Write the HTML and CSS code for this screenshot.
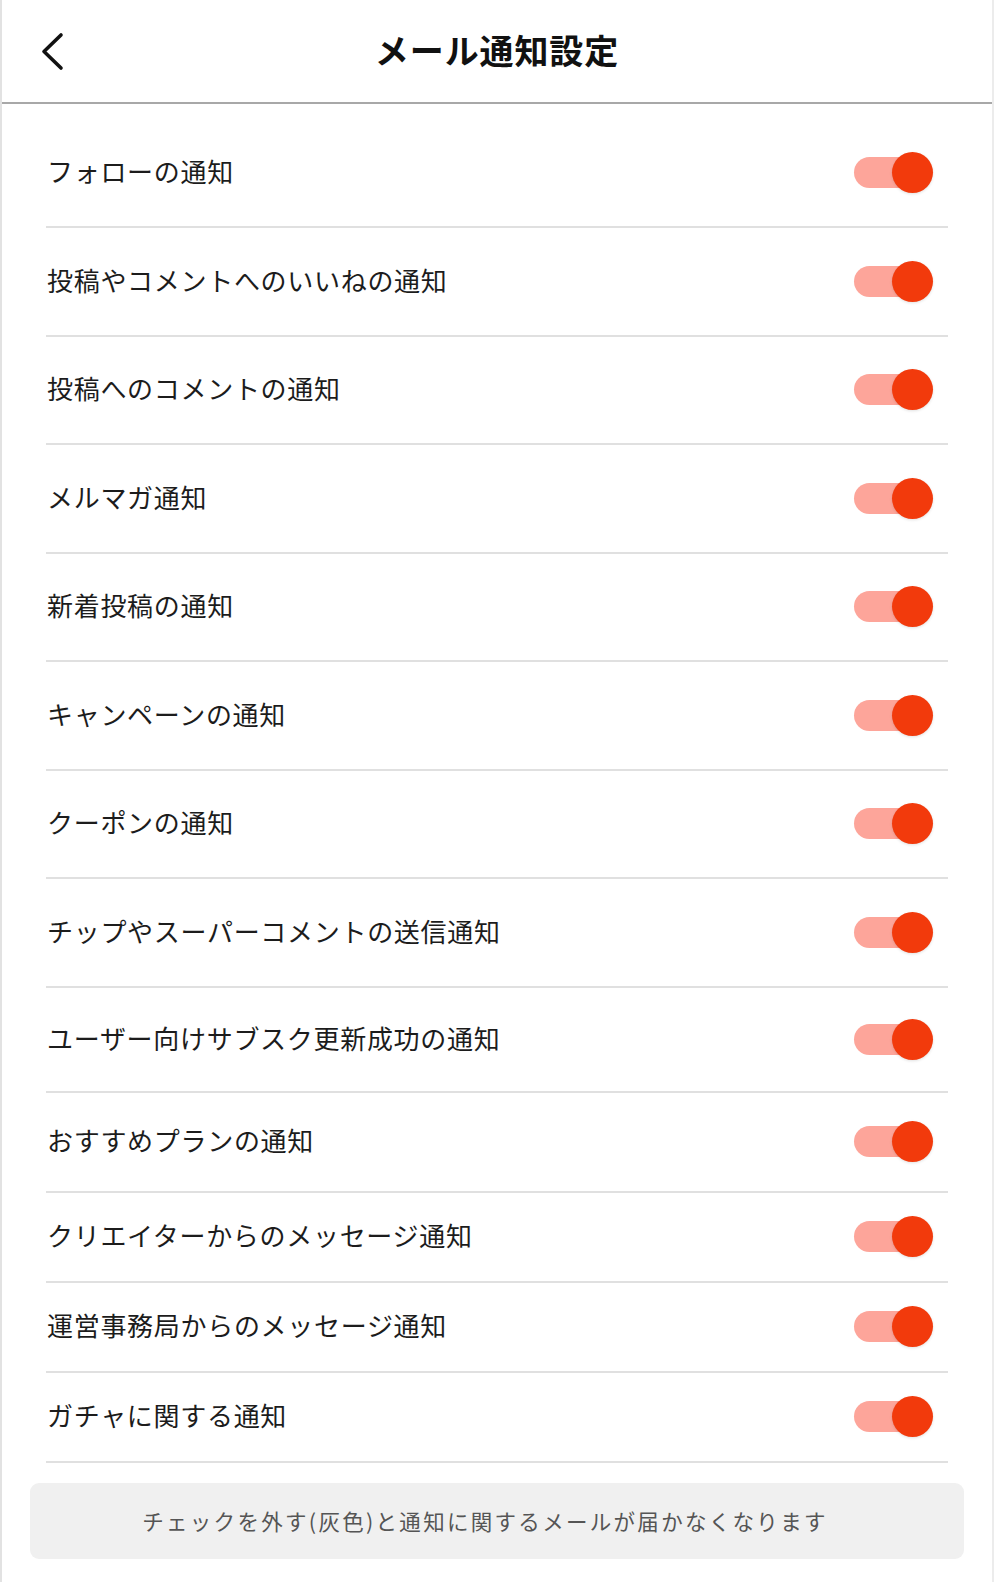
FILE: index.html
```html
<!DOCTYPE html>
<html lang="ja">
<head>
<meta charset="utf-8">
<title>メール通知設定</title>
<link rel="stylesheet" href="styles.css">
</head>
<body>
<div class="page">
  <header class="header">
    <button class="back" aria-label="戻る">
      <svg width="26" height="40" viewBox="0 0 26 40"><polyline points="21,3 4,19.5 21,36" fill="none" stroke="#111" stroke-width="3.6" stroke-linecap="round" stroke-linejoin="round"/></svg>
    </button>
    <h1 class="title">メール通知設定</h1>
  </header>
  <ul class="list">
    <li class="row"><span class="label">フォローの通知</span><span class="toggle"><span class="thumb"></span></span></li>
    <li class="row"><span class="label">投稿やコメントへのいいねの通知</span><span class="toggle"><span class="thumb"></span></span></li>
    <li class="row"><span class="label">投稿へのコメントの通知</span><span class="toggle"><span class="thumb"></span></span></li>
    <li class="row"><span class="label">メルマガ通知</span><span class="toggle"><span class="thumb"></span></span></li>
    <li class="row"><span class="label">新着投稿の通知</span><span class="toggle"><span class="thumb"></span></span></li>
    <li class="row"><span class="label">キャンペーンの通知</span><span class="toggle"><span class="thumb"></span></span></li>
    <li class="row"><span class="label">クーポンの通知</span><span class="toggle"><span class="thumb"></span></span></li>
    <li class="row"><span class="label">チップやスーパーコメントの送信通知</span><span class="toggle"><span class="thumb"></span></span></li>
    <li class="row row-b"><span class="label">ユーザー向けサブスク更新成功の通知</span><span class="toggle"><span class="thumb"></span></span></li>
    <li class="row row-c"><span class="label">おすすめプランの通知</span><span class="toggle"><span class="thumb"></span></span></li>
    <li class="row row-d"><span class="label">クリエイターからのメッセージ通知</span><span class="toggle"><span class="thumb"></span></span></li>
    <li class="row row-d"><span class="label">運営事務局からのメッセージ通知</span><span class="toggle"><span class="thumb"></span></span></li>
    <li class="row row-d"><span class="label">ガチャに関する通知</span><span class="toggle"><span class="thumb"></span></span></li>
  </ul>
  <div class="note">チェックを外す(灰色)と通知に関するメールが届かなくなります</div>
</div>
</body>
</html>
```

FILE: styles.css
```css
* { box-sizing: border-box; }
html, body {
  margin: 0;
  padding: 0;
  background: #ffffff;
}
body {
  font-family: "Noto Sans CJK JP", "Noto Sans", sans-serif;
  color: #1c1c1c;
}
.page {
  width: 994px;
  min-height: 1582px;
  border-left: 2px solid #e2e2e2;
  border-right: 2px solid #ececec;
  background: #fff;
}
.header {
  position: relative;
  height: 104px;
  border-bottom: 2px solid #a8a8a8;
  display: flex;
  align-items: center;
  justify-content: center;
}
.back {
  position: absolute;
  left: 38px;
  top: 32px;
  width: 26px;
  height: 40px;
  padding: 0;
  border: 0;
  background: none;
  display: flex;
}
.title {
  margin: 0;
  font-size: 34px;
  font-weight: 700;
  color: #111;
  letter-spacing: 0.9px;
  line-height: 1;
  padding: 0 0 2px 0;
}
.list {
  list-style: none;
  margin: 0 44px 0 44px;
  padding: 15.5px 0 0 0;
}
.row {
  height: 108.5px;
  border-bottom: 2px solid #e0e0e0;
  display: flex;
  align-items: center;
  justify-content: space-between;
  padding: 0 14px 3px 1px;
}
.row-b { height: 105px; }
.row-c { height: 100px; }
.row-d { height: 90px; }
.label {
  font-size: 26px;
  letter-spacing: 0.7px;
  line-height: 1;
  color: #1c1c1c;
}
.toggle {
  position: relative;
  width: 71px;
  height: 31px;
  border-radius: 16px;
  background: #fda59a;
  margin: 3px 9px 0 0;
}
.thumb {
  position: absolute;
  right: -8px;
  top: -5px;
  width: 41px;
  height: 41px;
  border-radius: 50%;
  background: #f23a0c;
  box-shadow: 0 1px 3px rgba(0, 0, 0, 0.12);
}
.note {
  margin: 20px 28px 0 28px;
  height: 76px;
  border-radius: 9px;
  background: #f0f0f0;
  color: #555;
  font-size: 21.5px;
  letter-spacing: 2.3px;
  display: flex;
  align-items: center;
  justify-content: center;
  padding: 0 24px 0 0;
}
```
